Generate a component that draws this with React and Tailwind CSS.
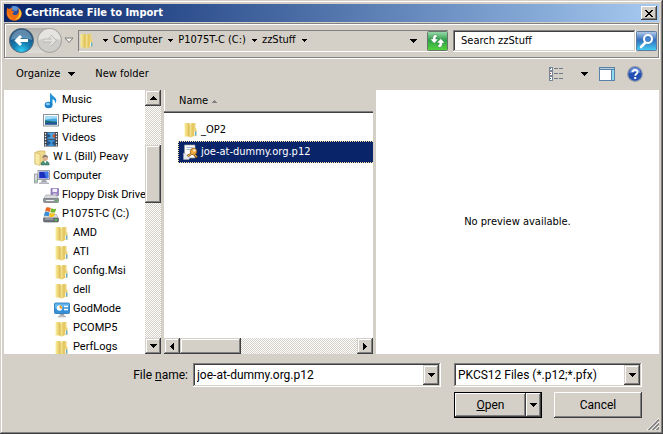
import React, { useState } from 'react';
import clsx from 'clsx';

const RAISED = 'bg-[#d4d0c8] shadow-[inset_-1px_-1px_#404040,inset_1px_1px_#d4d0c8,inset_-2px_-2px_#808080,inset_2px_2px_#ffffff]';
const PUSH = 'bg-[#d4d0c8] shadow-[inset_-1px_-1px_#404040,inset_1px_1px_#ffffff,inset_-2px_-2px_#808080]';
const SUNKEN = 'bg-white shadow-[inset_-1px_-1px_#ffffff,inset_1px_1px_#808080,inset_-2px_-2px_#d4d0c8,inset_2px_2px_#404040]';
const DITHER = 'bg-[repeating-conic-gradient(#ffffff_0_25%,#d4d0c8_0_50%)] bg-[length:2px_2px]';
const ETCHED = 'border border-[#808080] shadow-[inset_1px_1px_#ffffff,1px_1px_#ffffff]';

const ARROWS = {
    up: { box: '0 0 7 4', d: 'M3 0h1v1h1v1h1v1h1v1H0V3h1V2h1V1h1z', size: 'w-[7px] h-[4px]' },
    down: { box: '0 0 7 4', d: 'M0 0h7v1H6v1H5v1H4v1H3V3H2V2H1V1H0z', size: 'w-[7px] h-[4px]' },
    left: { box: '0 0 4 7', d: 'M4 0v7H3V6H2V5H1V4H0V3h1V2h1V1h1V0z', size: 'w-[4px] h-[7px]' },
    right: { box: '0 0 4 7', d: 'M0 0v7h1V6h1V5h1V4h1V3H3V2H2V1H1V0z', size: 'w-[4px] h-[7px]' },
    small: { box: '0 0 5 3', d: 'M0 0h5v1H4v1H3v1H2V2H1V1H0z', size: 'w-[5px] h-[3px]' },
};

function Arrow({ dir = 'down', className }) {
    const a = ARROWS[dir];
    return (
        <svg viewBox={a.box} className={clsx('shrink-0', a.size, className)} shapeRendering="crispEdges">
            <path d={a.d} fill="currentColor" />
        </svg>
    );
}

// 16px icons
function Icon({ children }) {
    return <svg viewBox="0 0 16 16" className="w-4 h-4 shrink-0">{children}</svg>;
}

function FolderIcon() {
    return (
        <Icon>
            <defs>
                <linearGradient id="fold" x1="0" y1="0" x2="1" y2="0">
                    <stop offset="0" stopColor="#fbefa0" />
                    <stop offset="1" stopColor="#dfbd52" />
                </linearGradient>
            </defs>
            <path d="M8 1h4.500v5l1 .8V14H8z" fill="#ecd47a" />
            <path d="M1.500 1H6.500v13.500H1.500z" fill="url(#fold)" />
            <path d="M6 2.500 10.500 1v13.200L7.500 15.800 6 15z" fill="url(#fold)" />
            <path d="M6.200 2.500v12.500" stroke="#c9a644" strokeWidth=".6" />
            <path d="M12.700 9.500v4" stroke="#3fa0df" strokeWidth="1.200" />
            <path d="M11.600 9.500v4" stroke="#fff" strokeWidth=".8" />
        </Icon>
    );
}

function MusicIcon() {
    return (
        <Icon>
            <path d="M8 .3c.3 2.800 5.500 3.700 5.300 7.300 0 1.400-.6 2.400-1.300 3.100.8-3-1.200-4-2.500-4.500V12H7V.3z" fill="#2793d6" />
            <ellipse cx="5.600" cy="12" rx="3.900" ry="3.300" fill="#1d82ca" />
            <ellipse cx="4.900" cy="11" rx="2" ry="1.300" fill="#8fd0f4" />
        </Icon>
    );
}

function PicturesIcon() {
    return (
        <Icon>
            <rect x=".5" y="2.500" width="15" height="11.500" fill="#fff" stroke="#8d9299" />
            <rect x="2" y="4" width="12" height="8.500" fill="#49a9e3" />
            <path d="M2 4h12v2.500C9 6 6 7.500 2 7.500z" fill="#a5dbf5" />
            <path d="M2 8.500c3-.5 7 1.200 12 1v3H2z" fill="#1b6f76" />
            <path d="M2 11c4-.8 8-.6 12 0v1.500H2z" fill="#2b4f9a" />
        </Icon>
    );
}

function VideosIcon() {
    return (
        <Icon>
            <rect x="1" y="1" width="14" height="14.500" fill="#3a4148" />
            <rect x="4" y="1.500" width="8" height="6.300" fill="#4fa5dd" />
            <rect x="4" y="8.700" width="8" height="6.300" fill="#3d8fd0" />
            <path d="m4 1.500 4 3.500-4 2.800z" fill="#27578e" />
            <path d="m12 2-3 3 3 2.800z" fill="#c0573f" />
            <path d="m4 9 4 3-4 3zM12 9l-3 3 3 3z" fill="#245489" />
            <path d="M2.500 2v13M13.500 2v13" stroke="#e8edf0" strokeWidth="1.400" strokeDasharray="1.500 1.300" />
        </Icon>
    );
}

function UserIcon() {
    return (
        <Icon>
            <path d="M1 2.500 5 1h6v13H1z" fill="#eed98a" stroke="#c9ae5c" strokeWidth=".7" />
            <path d="M1 2.500 6 4v11.500L1 14z" fill="#f8eaa6" stroke="#cfb55f" strokeWidth=".6" />
            <path d="M7 15c0-3 1.500-4 4-4s4.200 1 4.200 4z" fill="#4b8f78" stroke="#2f6455" strokeWidth=".5" />
            <path d="m10 11 1.200 2.500 1.300-2.500z" fill="#fff" />
            <circle cx="11.200" cy="8" r="2.700" fill="#dcb08a" />
            <path d="M8.400 8c-.3-4 5.800-4.200 5.700 0-1-1.500-3.500-2-5.700 0z" fill="#77706a" />
        </Icon>
    );
}

function ComputerIcon() {
    return (
        <Icon>
            <rect x=".5" y="5" width="3" height="9" fill="#d5d8dc" stroke="#878d95" strokeWidth=".7" />
            <path d="M1.200 12h1.500" stroke="#35b635" />
            <rect x="4" y="1.500" width="11.500" height="9" fill="#e8e8ea" stroke="#8a8e96" strokeWidth=".8" />
            <rect x="5.200" y="2.700" width="9.100" height="6.600" fill="#1a2fbe" />
            <path d="M10 2.700h4.300v6.600H12z" fill="#3e76e6" />
            <path d="M8 11h4l1 2H7z" fill="#a5a9b0" />
            <path d="M5 14.500c1-1.500 8.500-1.500 10 0z" fill="#c7cacf" stroke="#878d95" strokeWidth=".5" />
        </Icon>
    );
}

function FloppyIcon() {
    return (
        <Icon>
            <path d="M8 .5h7.500v7H8z" fill="#9a84c4" stroke="#7562a4" strokeWidth=".6" />
            <rect x="9.500" y=".8" width="4.500" height="3.200" fill="#f3f0fb" />
            <rect x="10" y="5.500" width="3.500" height="2" fill="#ddd6ee" />
            <path d="m3 7-2.500 4h15L13 7z" fill="#d9dadd" stroke="#94979c" strokeWidth=".6" />
            <rect x=".5" y="10.500" width="15" height="4" rx="1" fill="#8f949a" stroke="#666b71" strokeWidth=".6" />
            <path d="M3 12.500h8" stroke="#f2f2f2" />
            <path d="M12.500 12.500H14" stroke="#45c345" strokeWidth="1.400" />
        </Icon>
    );
}

function DriveIcon() {
    return (
        <Icon>
            <path d="m2 7.500-1.500 4h15l-2-4z" fill="#d9dadd" stroke="#8b8f95" strokeWidth=".5" />
            <path d="M3 .8c2-.9 3.200-.3 4.800.3l-1 3.900c-1.400-.6-2.800-1-4.800-.3z" fill="#ee6a24" />
            <path d="M8.300 1.300c1.700.8 3.200.8 4.900.1l-1 3.800c-1.700.7-3.200.6-4.900-.1z" fill="#75b62f" />
            <path d="M1.800 5.200c1.900-.7 3.200-.4 4.800.3l-1 3.800c-1.400-.6-2.800-1-4.800-.3z" fill="#358ed6" />
            <path d="M7.100 5.700c1.700.7 3.200.7 4.900 0l-1 3.800c-1.700.7-3.200.6-4.900-.1z" fill="#fcc21d" />
            <rect x=".5" y="11" width="15" height="4" rx="1" fill="#6d7379" stroke="#51565b" strokeWidth=".6" />
            <path d="M2 12h8" stroke="#b8bdc1" />
            <path d="M12 13h2" stroke="#3fda3f" strokeWidth="1.500" />
        </Icon>
    );
}

function GodModeIcon() {
    return (
        <Icon>
            <rect x=".5" y="1" width="15" height="10.500" rx="1" fill="#3390d9" stroke="#2470b0" strokeWidth=".8" />
            <path d="M1 1.500h14v3C9 4.500 5 6.500 1 6.500z" fill="#62b5ee" />
            <circle cx="5.500" cy="6" r="2.800" fill="#fff" />
            <path d="M5.500 6V3.200A2.800 2.800 0 0 1 8 7z" fill="#f29b28" />
            <path d="M10 4.500h4M10 7.500h4" stroke="#fff" strokeWidth="1.400" />
            <path d="M6 12h4l.5 1.500h-5z" fill="#9aa0a8" />
            <path d="M4 15c1-2 7-2 8 0z" fill="#c9ccd1" stroke="#858b93" strokeWidth=".4" />
        </Icon>
    );
}

function CertIcon() {
    return (
        <Icon>
            <path d="M1.500 1h10.500v13H1.500z" fill="#fdfdfd" stroke="#9a9a9a" strokeWidth=".7" />
            <path d="M3.500 3.500h7M3.500 5.500h4" stroke="#a9b8cd" />
            <path d="M.5 9 7 12l-1 3.500H.5z" fill="#e3e6ea" stroke="#b4b8bd" strokeWidth=".4" />
            <path d="m10 9-5.500 3M11 10l3 3.500" stroke="#8a5816" strokeWidth="2.400" />
            <circle cx="10.500" cy="7.500" r="3.200" fill="#eda93e" stroke="#93601a" strokeWidth=".8" />
            <path d="m10 9-5 2.800M11.500 10.500l2 2.300" stroke="#f2b854" strokeWidth="1" />
            <circle cx="11.400" cy="6.400" r="1.200" fill="#fff3d0" />
        </Icon>
    );
}

function FirefoxIcon() {
    return (
        <Icon>
            <circle cx="8.500" cy="8" r="7" fill="#2c4d9c" />
            <path d="M6 1.500c3-1 6 0 7 2L10 6 6 5z" fill="#5792d8" />
            <path d="M1.300 2.500c.5 1 1 1.300 2 1.400C4.500 3 6 3 7 3.600 5.800 4 5.500 5 6 6l2.500.5c-.3 1-1.700 1-2 2 .8 1.700 3 2 4.500 1C13.500 8 13 4.800 11.500 2.800 14.500 4 16 6.800 15.800 9.200 15.300 13 12 15.800 8.200 15.800 4 15.700.8 12.600.6 8.600.5 6 1 4 1.300 2.500z" fill="#ee6c12" />
            <path d="M13 3.800c2 2 2.600 4 2 6.200-.8 3-3.400 4.500-6 4.500 3-1.500 5.200-4 4-10.700z" fill="#fccb2e" />
            <path d="M1.500 6c.4 4 2.500 7 6 8.200C4 14 1.500 11 1.500 6z" fill="#fba52a" />
        </Icon>
    );
}

const TREE = [
    { name: 'Music', icon: MusicIcon, level: 1 },
    { name: 'Pictures', icon: PicturesIcon, level: 1 },
    { name: 'Videos', icon: VideosIcon, level: 1 },
    { name: 'W L (Bill) Peavy', icon: UserIcon, level: 0 },
    { name: 'Computer', icon: ComputerIcon, level: 0 },
    { name: 'Floppy Disk Drive', icon: FloppyIcon, level: 1 },
    { name: 'P1075T-C (C:)', icon: DriveIcon, level: 1 },
    { name: 'AMD', icon: FolderIcon, level: 2 },
    { name: 'ATI', icon: FolderIcon, level: 2 },
    { name: 'Config.Msi', icon: FolderIcon, level: 2 },
    { name: 'dell', icon: FolderIcon, level: 2 },
    { name: 'GodMode', icon: GodModeIcon, level: 2 },
    { name: 'PCOMP5', icon: FolderIcon, level: 2 },
    { name: 'PerfLogs', icon: FolderIcon, level: 2 },
];

const INDENT = ['pl-[30px]', 'pl-[39px]', 'pl-[50px]'];

const FILES = [
    { name: '_OP2', icon: FolderIcon },
    { name: 'joe-at-dummy.org.p12', icon: CertIcon },
];

function TitleBar() {
    return (
        <header className="flex h-[18px] items-center gap-[3px] bg-linear-to-r from-[#0a246a] to-[#a6caf0] px-0.5">
            <FirefoxIcon />
            <h1 className="flex-1 font-bold text-white">Certificate File to Import</h1>
            <button aria-label="Close" className={clsx('flex h-[14px] w-4 items-center justify-center', PUSH)}>
                <svg viewBox="0 0 8 7" className="h-[7px] w-2" shapeRendering="crispEdges">
                    <path d="M0 0h2v1h1v1h2V1h1V0h2v1H7v1H6v1H5v1h1v1h1v1h1v1H6V6H5V5H3v1H2v1H0V6h1V5h1V4h1V3H2V2H1V1H0z" />
                </svg>
            </button>
        </header>
    );
}

function HistoryButtons() {
    return (
        <div className="flex items-center">
            <div className="flex gap-[3px] rounded-full bg-linear-to-b from-[#b4b2ae] via-[#c9c7c2] to-[#dedcd7]">
                <button aria-label="Back">
                    <svg viewBox="0 0 25 25" className="h-[25px] w-[25px]">
                        <defs>
                            <radialGradient id="back" cx=".5" cy=".95" r=".8">
                                <stop offset="0" stopColor="#2fd2f5" />
                                <stop offset=".45" stopColor="#1580b5" />
                                <stop offset="1" stopColor="#174a78" />
                            </radialGradient>
                        </defs>
                        <circle cx="12.500" cy="12.500" r="12" fill="url(#back)" stroke="#54687c" />
                        <path d="M2 12a10.500 10.500 0 0 1 21 0C17 9.500 8 9.500 2 12z" fill="#a5c4da" opacity=".5" />
                        <path d="m12 8-4.500 4.500L12 17M8 12.500h11" stroke="#fff" strokeWidth="3" fill="none" />
                    </svg>
                </button>
                <button aria-label="Forward">
                    <svg viewBox="0 0 25 25" className="h-[25px] w-[25px]">
                        <circle cx="12.500" cy="12.500" r="12" fill="#cfcdca" stroke="#a09f9c" />
                        <path d="M1.500 12a11 11 0 0 1 22 0c-6-2-16-2-22 0z" fill="#e6e4e1" />
                        <path d="m13 8 4.500 4.500L13 17M17 12.500H6" stroke="#b4b3b0" strokeWidth="3.600" fill="none" />
                        <path d="m13 8 4.500 4.500L13 17M17 12.500H6.500" stroke="#e4e3e1" strokeWidth="2.200" fill="none" />
                    </svg>
                </button>
            </div>
            <button aria-label="Recent pages" className="px-0.5">
                <svg viewBox="0 0 10 7" className="h-[7px] w-[10px]">
                    <path d="M1 1h8L5 5.500z" fill="#f4f3f1" stroke="#7e7d7a" />
                </svg>
            </button>
        </div>
    );
}

function NavBar() {
    const [search, setSearch] = useState('Search zzStuff');
    const crumbs = ['Computer', 'P1075T-C (C:)', 'zzStuff'];

    return (
        <nav className={clsx('mt-px flex h-[35px] items-center pl-1 pr-px', ETCHED)}>
            <HistoryButtons />
            <div className="ml-0.5 flex h-[22px] flex-1 items-center border-t border-b border-l border-t-[#808080] border-b-white border-l-[#808080]">
                <FolderIcon />
                <Arrow dir="small" className="ml-2" />
                {crumbs.map((c) => (
                    <React.Fragment key={c}>
                        <button className="ml-[5px] whitespace-nowrap">{c}</button>
                        <Arrow dir="small" className="ml-1.5" />
                    </React.Fragment>
                ))}
                <button aria-label="Previous locations" className="ml-auto mr-2.5"><Arrow /></button>
                <button aria-label="Refresh" className="h-5 w-[21px]">
                    <svg viewBox="0 0 21 20" className="h-5 w-[21px]">
                        <defs>
                            <linearGradient id="go" x1="0" y1="0" x2="0" y2="1">
                                <stop offset="0" stopColor="#9fdcb0" />
                                <stop offset=".45" stopColor="#2fa04a" />
                                <stop offset="1" stopColor="#55d63a" />
                            </linearGradient>
                        </defs>
                        <rect x=".5" y=".5" width="20" height="19" rx="1" fill="url(#go)" stroke="#68746a" />
                        <path d="M9.500 3.500C6.500 3.500 5.500 5 5.500 8H3l4.200 4.500L11.500 8H8.800c0-1.500.2-2.200 1.700-2.200z" fill="#fff" stroke="#267a38" strokeWidth=".5" />
                        <path d="M11.500 16.500c3 0 4-1.500 4-4.500H18l-4.200-4.500L9.500 12h2.700c0 1.500-.2 2.200-1.700 2.200z" fill="#fff" stroke="#267a38" strokeWidth=".5" />
                    </svg>
                </button>
            </div>
            <input
                aria-label="Search"
                value={search}
                onChange={(e) => setSearch(e.target.value)}
                className={clsx('ml-[5px] h-[22px] w-[183px] px-2 outline-none', SUNKEN)}
            />
            <button aria-label="Start search" className="h-5 w-[21px]">
                <svg viewBox="0 0 21 20" className="h-5 w-[21px]">
                    <defs>
                        <linearGradient id="find" x1="0" y1="0" x2="0" y2="1">
                            <stop offset="0" stopColor="#b8cdea" />
                            <stop offset=".45" stopColor="#336fbd" />
                            <stop offset="1" stopColor="#43d0f4" />
                        </linearGradient>
                    </defs>
                    <rect x=".5" y=".5" width="20" height="19" rx="1" fill="url(#find)" stroke="#5d7ca4" />
                    <path d="m9.500 11.500-4.500 4.500" stroke="#fff" strokeWidth="2.600" strokeLinecap="round" />
                    <circle cx="12" cy="8" r="4" fill="#4282c8" stroke="#fff" strokeWidth="2" />
                </svg>
            </button>
        </nav>
    );
}

function Toolbar() {
    return (
        <div className="flex h-8 items-center pl-3 pr-4">
            <button className="flex items-center gap-2">Organize <Arrow /></button>
            <button className="ml-5">New folder</button>
            <div className="ml-auto flex items-center">
                <button aria-label="Change view" className="flex items-center gap-[17px]">
                    <Icon>
                        <g shapeRendering="crispEdges">
                            <path d="M1 1h4v14H1z" fill="#7b8794" />
                            <path d="M2 2h2v2H2zM2 6h2v3H2zM2 11h2v3H2z" fill="#fff" />
                            <path d="M2 2h1v1H2zM2 12h1v1H2z" fill="#3c67a8" />
                            <path d="M2 7h1v1H2z" fill="#c23a2e" />
                            <path d="M6 2h4v1H6zM11 2h4v1h-4zM6 7h4v1H6zM11 7h4v1h-4zM6 12h4v1H6zM11 12h4v1h-4z" fill="#6f7b88" />
                        </g>
                    </Icon>
                    <Arrow />
                </button>
                <button aria-label="Show the preview pane" className="ml-[11px]">
                    <Icon>
                        <g shapeRendering="crispEdges">
                            <rect x="0" y="1" width="16" height="14" fill="#5a82a8" />
                            <rect x="1" y="4" width="11" height="10" fill="#fff" />
                            <rect x="1" y="2" width="14" height="1" fill="#b3cde3" />
                            <rect x="13" y="4" width="2" height="10" fill="#8ddcf0" />
                        </g>
                    </Icon>
                </button>
                <button aria-label="Get help" className="ml-3">
                    <Icon>
                        <circle cx="8" cy="8" r="7.300" fill="#2450b4" stroke="#8c98ac" strokeWidth="1.200" />
                        <path d="M2.500 7a5.500 5.500 0 0 1 11 0c-3-1.500-8-1.500-11 0z" fill="#6b92dc" />
                        <path d="M5.500 6.300C5.600 3 10.600 3 10.500 6.100 10.400 8 8.200 8 8.200 9.800" stroke="#fff" strokeWidth="1.800" fill="none" />
                        <rect x="7.200" y="11" width="2" height="2" fill="#fff" />
                    </Icon>
                </button>
            </div>
        </div>
    );
}

function FolderTree() {
    return (
        <div className="flex w-[157px] shrink-0">
            <ul className='min-w-0 flex-1 overflow-hidden bg-white pt-px font-["Roboto",sans-serif]'>
                {TREE.map((item) => (
                    <li key={item.name} className={clsx('flex h-[19px] items-center gap-[3px] whitespace-nowrap', INDENT[item.level])}>
                        <item.icon />
                        {item.name}
                    </li>
                ))}
            </ul>
            <div className={clsx('flex w-4 flex-col', DITHER)}>
                <button aria-label="Scroll up" className={clsx('flex h-4 items-center justify-center', RAISED)}><Arrow dir="up" /></button>
                <div className="flex-[39]" />
                <div className={clsx('flex-[58]', RAISED)} />
                <div className="flex-[135]" />
                <button aria-label="Scroll down" className={clsx('flex h-4 items-center justify-center', RAISED)}><Arrow /></button>
            </div>
        </div>
    );
}

function FileList() {
    const [selected, setSelected] = useState('joe-at-dummy.org.p12');

    return (
        <div className="flex w-[209px] shrink-0 flex-col bg-white">
            <button className="flex h-[23px] items-center gap-1 bg-[#d4d0c8] pl-[15px] shadow-[inset_0_-1px_#404040,inset_0_-2px_#808080,inset_1px_0_#ffffff]">
                Name
                <svg viewBox="0 0 5 3" className="h-[3px] w-[5px]" shapeRendering="crispEdges">
                    <path d="M2 0h1v1h1v1h1v1H0V2h1V1h1z" fill="#808080" />
                </svg>
            </button>
            <ul className="flex-1 pl-[14px] pt-1.5">
                {FILES.map((file) => (
                    <li key={file.name}>
                        <button
                            onClick={() => setSelected(file.name)}
                            className={clsx(
                                'flex h-[22px] w-full items-center gap-0.5 border border-r-0 border-dotted pl-1',
                                selected === file.name ? 'border-[#f5db95] bg-[#0a246a] text-white' : 'border-transparent'
                            )}
                        >
                            <file.icon />
                            {file.name}
                        </button>
                    </li>
                ))}
            </ul>
            <div className={clsx('flex h-4', DITHER)}>
                <button aria-label="Scroll left" className={clsx('flex w-4 items-center justify-center', RAISED)}><Arrow dir="left" /></button>
                <div className={clsx('flex-[61]', RAISED)} />
                <div className="flex-[116]" />
                <button aria-label="Scroll right" className={clsx('flex w-4 items-center justify-center', RAISED)}><Arrow dir="right" /></button>
            </div>
        </div>
    );
}

function Footer() {
    const [name, setName] = useState('joe-at-dummy.org.p12');
    const font = 'font-["Roboto",sans-serif] text-xs';

    return (
        <footer className={clsx('relative grid h-[76px] grid-cols-[189px_1fr_188px] content-start gap-y-[5px] pt-[9px] pr-[17px]', font)}>
            <label htmlFor="filename" className="self-center pr-[5px] text-right">File <u>n</u>ame:</label>
            <div className={clsx('mr-[13px] flex h-6 p-0.5', SUNKEN)}>
                <input
                    id="filename"
                    value={name}
                    onChange={(e) => setName(e.target.value)}
                    className="min-w-0 flex-1 px-0.5 outline-none"
                />
                <button aria-label="Show recent names" className={clsx('flex w-4 items-center justify-center', RAISED)}><Arrow /></button>
            </div>
            <div className={clsx('relative h-6 p-0.5', SUNKEN)}>
                <select aria-label="File type" className="h-full w-full appearance-none pl-0.5 pr-4 outline-none">
                    <option>PKCS12 Files (*.p12;*.pfx)</option>
                </select>
                <span className={clsx('pointer-events-none absolute inset-y-0.5 right-0.5 flex w-4 items-center justify-center', RAISED)}><Arrow /></span>
            </div>
            <div className="col-start-3 flex h-[26px] justify-between">
                <div className="flex w-[88px] border border-black">
                    <button className={clsx('flex-1', PUSH)}><u>O</u>pen</button>
                    <button aria-label="Open options" className={clsx('flex w-[15px] items-center justify-center', PUSH)}><Arrow /></button>
                </div>
                <button className={clsx('w-[88px]', PUSH)}>Cancel</button>
            </div>
            <svg viewBox="0 0 12 12" className="absolute right-0 bottom-0 h-3 w-3">
                <path d="M0 12 12 0M4 12l8-8M8 12l4-4" stroke="#fff" strokeWidth="1" />
                <path d="M1.500 12 12 1.500M5.500 12 12 5.500M9.500 12 12 9.500" stroke="#808080" strokeWidth="1.600" />
            </svg>
        </footer>
    );
}

export default function App() {
    return (
        <div className='flex h-screen flex-col bg-[#d4d0c8] p-1 font-["DejaVu_Sans_Condensed","DejaVu_Sans",sans-serif] text-[11px] text-black shadow-[inset_-1px_-1px_#404040,inset_1px_1px_#d4d0c8,inset_-2px_-2px_#808080,inset_2px_2px_#ffffff]'>
            <TitleBar />
            <NavBar />
            <Toolbar />
            <main className="flex min-h-0 flex-1 gap-[3px] overflow-hidden">
                <FolderTree />
                <FileList />
                <section className="flex flex-1 items-center justify-center bg-white">No preview available.</section>
            </main>
            <Footer />
        </div>
    );
}
